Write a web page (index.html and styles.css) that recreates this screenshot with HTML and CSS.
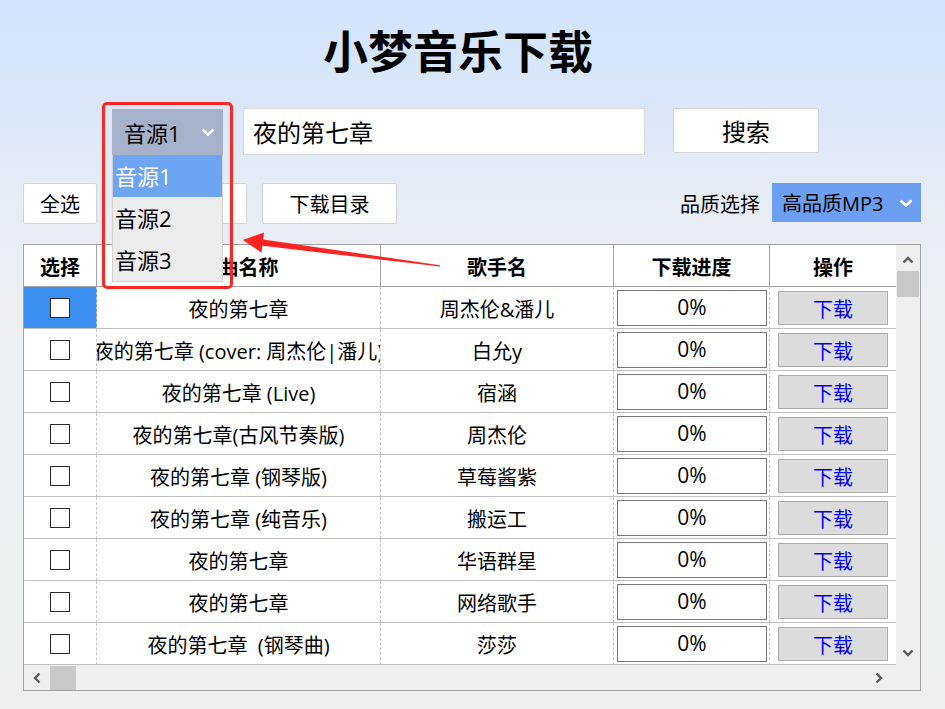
FILE: index.html
```html
<!DOCTYPE html>
<html lang="zh-CN">
<head>
<meta charset="utf-8">
<title>小梦音乐下载</title>
<link rel="stylesheet" href="styles.css">
</head>
<body>
<div class="page">
  <h1 class="title">小梦音乐下载</h1>

  <div class="search-row">
    <div class="source">
      <div class="select source-select">
        <span>音源1</span>
        <svg class="chev" width="14" height="8" viewBox="0 0 14 8"><polyline points="1.5,1.5 7,6.5 12.5,1.5" fill="none" stroke="#fff" stroke-width="2.6"/></svg>
      </div>
      <ul class="source-menu">
        <li class="active">音源1</li>
        <li>音源2</li>
        <li>音源3</li>
      </ul>
      <div class="mark-box"></div>
    </div>
    <div class="search-input">夜的第七章</div>
    <button class="btn search-btn">搜索</button>
  </div>

  <div class="toolbar">
    <button class="btn btn-all">全选</button>
    <button class="btn btn-wide" aria-label="下载选中"></button>
    <button class="btn btn-wide">下载目录</button>
    <div class="quality">
      <span class="quality-label">品质选择</span>
      <div class="select quality-select">
        <span>高品质MP3</span>
        <svg class="chev" width="14" height="8" viewBox="0 0 14 8"><polyline points="1.5,1.5 7,6.5 12.5,1.5" fill="none" stroke="#fff" stroke-width="2.6"/></svg>
      </div>
    </div>
  </div>

  <div class="table">
    <div class="table-main">
      <div class="grid">
        <div class="th">选择</div>
        <div class="th">歌曲名称</div>
        <div class="th">歌手名</div>
        <div class="th">下载进度</div>
        <div class="th last">操作</div>

        <div class="td sel selected"><span class="check"></span></div>
        <div class="td"><span>夜的第七章</span></div>
        <div class="td"><span>周杰伦&amp;潘儿</span></div>
        <div class="td prog"><span class="pbox">0%</span></div>
        <div class="td last op"><span class="dl">下载</span></div>

        <div class="td sel"><span class="check"></span></div>
        <div class="td"><span>夜的第七章 (cover: 周杰伦|潘儿)</span></div>
        <div class="td"><span>白允y</span></div>
        <div class="td prog"><span class="pbox">0%</span></div>
        <div class="td last op"><span class="dl">下载</span></div>

        <div class="td sel"><span class="check"></span></div>
        <div class="td"><span>夜的第七章 (Live)</span></div>
        <div class="td"><span>宿涵</span></div>
        <div class="td prog"><span class="pbox">0%</span></div>
        <div class="td last op"><span class="dl">下载</span></div>

        <div class="td sel"><span class="check"></span></div>
        <div class="td"><span>夜的第七章(古风节奏版)</span></div>
        <div class="td"><span>周杰伦</span></div>
        <div class="td prog"><span class="pbox">0%</span></div>
        <div class="td last op"><span class="dl">下载</span></div>

        <div class="td sel"><span class="check"></span></div>
        <div class="td"><span>夜的第七章 (钢琴版)</span></div>
        <div class="td"><span>草莓酱紫</span></div>
        <div class="td prog"><span class="pbox">0%</span></div>
        <div class="td last op"><span class="dl">下载</span></div>

        <div class="td sel"><span class="check"></span></div>
        <div class="td"><span>夜的第七章 (纯音乐)</span></div>
        <div class="td"><span>搬运工</span></div>
        <div class="td prog"><span class="pbox">0%</span></div>
        <div class="td last op"><span class="dl">下载</span></div>

        <div class="td sel"><span class="check"></span></div>
        <div class="td"><span>夜的第七章</span></div>
        <div class="td"><span>华语群星</span></div>
        <div class="td prog"><span class="pbox">0%</span></div>
        <div class="td last op"><span class="dl">下载</span></div>

        <div class="td sel"><span class="check"></span></div>
        <div class="td"><span>夜的第七章</span></div>
        <div class="td"><span>网络歌手</span></div>
        <div class="td prog"><span class="pbox">0%</span></div>
        <div class="td last op"><span class="dl">下载</span></div>

        <div class="td sel"><span class="check"></span></div>
        <div class="td"><span>夜的第七章&nbsp;&nbsp;(钢琴曲)</span></div>
        <div class="td"><span>莎莎</span></div>
        <div class="td prog"><span class="pbox">0%</span></div>
        <div class="td last op"><span class="dl">下载</span></div>
      </div>
      <div class="vscroll">
        <svg class="sc-up" width="12" height="8" viewBox="0 0 12 8"><polyline points="1.5,6.5 6,2 10.5,6.5" fill="none" stroke="#5a5a5a" stroke-width="2.4"/></svg>
        <div class="vthumb"></div>
        <svg class="sc-down" width="12" height="8" viewBox="0 0 12 8"><polyline points="1.5,1.5 6,6 10.5,1.5" fill="none" stroke="#5a5a5a" stroke-width="2.4"/></svg>
      </div>
    </div>
    <div class="hscroll">
      <svg class="sc-left" width="8" height="12" viewBox="0 0 8 12"><polyline points="6.5,1.5 2,6 6.5,10.5" fill="none" stroke="#5a5a5a" stroke-width="2.4"/></svg>
      <div class="hthumb"></div>
      <svg class="sc-right" width="8" height="12" viewBox="0 0 8 12"><polyline points="1.5,1.5 6,6 1.5,10.5" fill="none" stroke="#5a5a5a" stroke-width="2.4"/></svg>
    </div>
  </div>

  <svg class="arrow" width="945" height="709" viewBox="0 0 945 709">
    <polygon points="243,240 264,232.5 263.2,239.4 440,265.2 440,266.6 262.4,245.8 261.5,252.8" fill="#ff2424"/>
  </svg>
</div>
</body>
</html>
```

FILE: styles.css
```css
* { box-sizing: border-box; }

html, body {
  margin: 0;
  padding: 0;
}

body {
  width: 945px;
  height: 709px;
  overflow: hidden;
  font-family: "Open Sans", "Noto Sans CJK SC", sans-serif;
  color: #000;
  background: linear-gradient(180deg, #d2e4fc 0px, #dbe7f7 110px, #e8edf4 210px, #eeeff1 320px, #efefef 709px);
}

.page {
  position: relative;
  height: 709px;
  padding: 0 24px 0 23px;
}

.title {
  margin: 0;
  height: 99px;
  line-height: 99px;
  text-align: center;
  padding-right: 28px;
  font-family: "Noto Sans CJK SC", sans-serif;
  font-size: 45px;
  font-weight: 700;
  letter-spacing: 0;
}

/* search row */
.search-row {
  margin-top: 9px;
  display: flex;
  align-items: flex-start;
  padding-left: 89px;
  height: 47px;
}

.source {
  position: relative;
  z-index: 10;
  margin-top: 1px;
}

.select {
  display: flex;
  align-items: center;
  justify-content: space-between;
}

.source-select {
  width: 111px;
  height: 46px;
  background: #a6b2c9;
  font-size: 22px;
  padding: 0 8px 0 12px;
}

.source-menu {
  position: absolute;
  left: 0;
  top: 46px;
  width: 111px;
  margin: 0;
  padding: 0;
  list-style: none;
  background: #ececec;
  border: 1px solid #d2d2d2;
  border-top: none;
}

.source-menu li {
  height: 42px;
  line-height: 42px;
  font-size: 22px;
  padding-left: 2px;
}

.source-menu li.active {
  background: #6ea5f3;
  color: #fff;
}

.mark-box {
  position: absolute;
  left: -10px;
  top: -7px;
  width: 131px;
  height: 187px;
  border: 3px solid #ff2626;
  border-radius: 5px;
}

.search-input {
  margin-left: 20px;
  width: 402px;
  height: 47px;
  background: #fff;
  border: 1px solid #dadada;
  font-size: 24px;
  padding-left: 9px;
  display: flex;
  align-items: center;
}

.btn {
  font-family: inherit;
  background: #fff;
  border: 1px solid #d2d2d2;
  border-radius: 2px;
  color: #000;
  padding: 0;
  display: flex;
  align-items: center;
  justify-content: center;
}

.search-btn {
  margin-left: 28px;
  width: 146px;
  height: 45px;
  font-size: 24px;
}

/* toolbar */
.toolbar {
  margin-top: 28px;
  display: flex;
  align-items: flex-start;
  gap: 15px;
  height: 41px;
}

.btn-all {
  width: 74px;
  height: 41px;
  font-size: 20px;
}

.btn-wide {
  width: 135px;
  height: 41px;
  font-size: 20px;
}

.quality {
  margin-left: auto;
  display: flex;
  align-items: center;
  gap: 12px;
  height: 39px;
}

.quality-label {
  font-size: 20px;
  padding-top: 2px;
}

.quality-select {
  width: 149px;
  height: 39px;
  background: #6c9ef1;
  font-size: 20px;
  padding: 0 8px 0 10px;
}

/* table */
.table {
  margin-top: 20px;
  width: 898px;
  height: 447px;
  border: 1px solid #a2a2a2;
  display: flex;
  flex-direction: column;
  background: #efefef;
}

.table-main {
  display: flex;
  height: 420px;
}

.grid {
  width: 872px;
  display: grid;
  grid-template-columns: 73px 284px 233px 156px 126px;
  grid-auto-rows: 42px;
  background: #fff;
}

.th {
  border-right: 1px solid #a2a2a2;
  border-bottom: 1px solid #a2a2a2;
  display: flex;
  align-items: center;
  justify-content: center;
  font-family: "Noto Sans CJK SC", sans-serif;
  font-weight: 700;
  font-size: 20px;
  padding-top: 2px;
}

.td {
  border-right: 1px dashed #c4c4c4;
  border-bottom: 1px solid #c0c0c0;
  display: flex;
  align-items: center;
  justify-content: center;
  overflow: hidden;
  white-space: nowrap;
  font-size: 20px;
  padding-top: 1px;
}

.td span { flex: none; }

.th.last, .td.last { border-right: none; }

.td.selected { background: #3b8ff0; }

.check {
  width: 20px;
  height: 20px;
  border: 1px solid #2a2a2a;
  background: #fff;
}

.td.prog {
  padding: 3px 2px 2px 3px;
  align-items: stretch;
  justify-content: stretch;
}

.pbox {
  flex: 1 1 auto !important;
  border: 1px solid #7a7a7a;
  background: #fff;
  display: flex;
  align-items: center;
  justify-content: center;
  font-size: 21px;
  padding-bottom: 3px;
}

.dl {
  width: 110px;
  height: 34px;
  background: #dcdcdc;
  border: 1px solid #ababab;
  color: #0000ff;
  display: flex;
  align-items: center;
  justify-content: center;
  font-size: 20px;
}

.vscroll {
  width: 24px;
  position: relative;
  background: #efefef;
  display: flex;
  flex-direction: column;
  align-items: center;
}

.sc-up { margin-top: 11px; }

.vthumb {
  margin-top: 7px;
  width: 22px;
  height: 26px;
  background: #c9c9c9;
}

.sc-down { margin-top: auto; margin-bottom: 8px; }

.hscroll {
  height: 25px;
  display: flex;
  align-items: center;
  background: #efefef;
  padding-left: 9px;
}

.hthumb {
  margin-left: 9px;
  width: 26px;
  height: 24px;
  align-self: flex-end;
  background: #c9c9c9;
}

.sc-right { margin-left: auto; margin-right: 37px; }

.arrow {
  position: absolute;
  left: 0;
  top: 0;
  z-index: 20;
  pointer-events: none;
}
```
